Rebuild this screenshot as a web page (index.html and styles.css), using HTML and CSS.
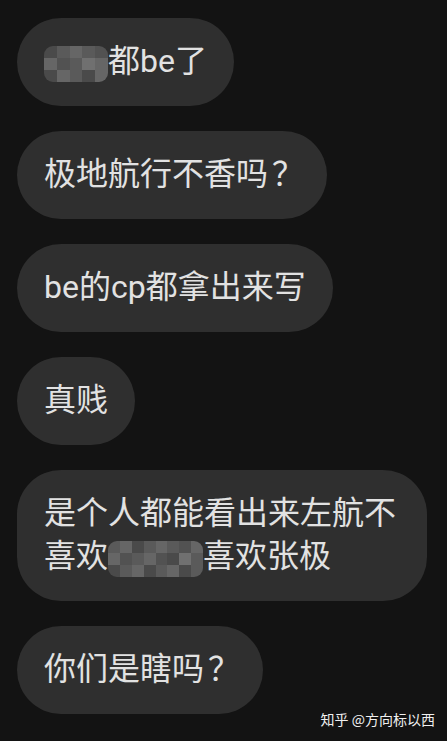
FILE: index.html
```html
<!DOCTYPE html>
<html lang="zh">
<head>
<meta charset="utf-8">
<link rel="stylesheet" href="styles.css">
</head>
<body>
<div class="chat">
  <div class="bubble"><span class="mosaic m5"><i class="a"></i><i class="b"></i><i class="c"></i><i class="b"></i><i class="d"></i><i class="c"></i><i class="d"></i><i class="b"></i><i class="e"></i><i class="c"></i><i class="a"></i><i class="c"></i><i class="b"></i><i class="a"></i><i class="c"></i></span>都be了</div>
  <div class="bubble">极地航行不香吗<span class="q">？</span></div>
  <div class="bubble">be的cp都拿出来写</div>
  <div class="bubble">真贱</div>
  <div class="bubble">是个人都能看出来左航不喜欢<span class="mosaic m8"><i class="b"></i><i class="c"></i><i class="a"></i><i class="b"></i><i class="c"></i><i class="b"></i><i class="d"></i><i class="c"></i><i class="c"></i><i class="d"></i><i class="b"></i><i class="c"></i><i class="d"></i><i class="a"></i><i class="e"></i><i class="b"></i><i class="a"></i><i class="b"></i><i class="c"></i><i class="a"></i><i class="b"></i><i class="c"></i><i class="a"></i><i class="b"></i></span>喜欢张极</div>
  <div class="bubble">你们是瞎吗<span class="q">？</span></div>
</div>
<div class="watermark">知乎 @方向标以西</div>
</body>
</html>
```

FILE: styles.css
```css
html, body {
  margin: 0;
  padding: 0;
}
body {
  background: #131313;
  width: 447px;
  height: 741px;
  overflow: hidden;
  position: relative;
  font-family: Roboto, "Noto Sans CJK SC", sans-serif;
}
.chat {
  display: flex;
  flex-direction: column;
  align-items: flex-start;
  gap: 25px;
  padding: 18px 0 0 17px;
}
.bubble {
  background: #2f2f2f;
  color: #e2e2e2;
  font-size: 32px;
  line-height: 43px;
  padding: 22px 27px 23px 27px;
  border-radius: 44px;
  max-width: 356px;
}
.q {
  display: inline-block;
  width: 32px;
  padding-left: 4px;
  box-sizing: border-box;
  text-align: center;
}
.mosaic {
  display: inline-block;
  vertical-align: middle;
  height: 36px;
  line-height: 0;
  border-radius: 9px;
  overflow: hidden;
  font-size: 0;
}
.m5 {
  width: 64px;
}
.m8 {
  width: 95px;
}
.mosaic i {
  display: inline-block;
  height: 12px;
}
.m5 i { width: 12.8px; }
.m8 i { width: 11.875px; }
.mosaic .a { background: #4a4a4a; }
.mosaic .b { background: #5a5a5a; }
.mosaic .c { background: #666666; }
.mosaic .d { background: #525252; }
.mosaic .e { background: #707070; }
.watermark {
  position: absolute;
  right: 12px;
  top: 709px;
  color: #f0f0f0;
  font-size: 14px;
  font-family: "Noto Sans CJK SC", sans-serif;
}
```
